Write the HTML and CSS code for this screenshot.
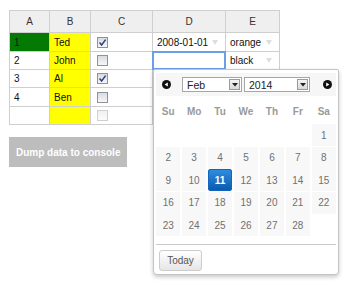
FILE: index.html
```html
<!DOCTYPE html>
<html>
<head>
<meta charset="utf-8">
<link rel="stylesheet" href="styles.css">
</head>
<body>
<div class="page">
  <div class="sheet">
    <div class="hd">A</div><div class="hd">B</div><div class="hd">C</div><div class="hd">D</div><div class="hd">E</div>

    <div class="c green">1</div>
    <div class="c yellow">Ted</div>
    <div class="c chk"><span class="cb"><svg width="9" height="9" viewBox="0 0 9 9"><path d="M1.5 4.6 L3.6 7 L7.6 1.6" fill="none" stroke="#2c4280" stroke-width="1.5"/></svg></span></div>
    <div class="c drop"><span>2008-01-01</span><span class="arr"></span></div>
    <div class="c drop"><span>orange</span><span class="arr"></span></div>

    <div class="c">2</div>
    <div class="c yellow">John</div>
    <div class="c chk"><span class="cb"></span></div>
    <div class="c sel"></div>
    <div class="c drop"><span>black</span><span class="arr"></span></div>

    <div class="c">3</div>
    <div class="c yellow">Al</div>
    <div class="c chk"><span class="cb"><svg width="9" height="9" viewBox="0 0 9 9"><path d="M1.5 4.6 L3.6 7 L7.6 1.6" fill="none" stroke="#2c4280" stroke-width="1.5"/></svg></span></div>
    <div class="c"></div>
    <div class="c"></div>

    <div class="c">4</div>
    <div class="c yellow">Ben</div>
    <div class="c chk"><span class="cb"></span></div>
    <div class="c"></div>
    <div class="c"></div>

    <div class="c"></div>
    <div class="c yellow"></div>
    <div class="c chk"><span class="cb faint"></span></div>
    <div class="c"></div>
    <div class="c"></div>
  </div>

  <button class="dump">Dump data to console</button>

  <div class="picker">
    <div class="ph">
      <svg class="nav prev" width="9" height="9" viewBox="0 0 9 9"><circle cx="4.5" cy="4.5" r="4.5" fill="#111"/><path d="M2.6 4.5 L5.8 2.6 L5.8 6.4 Z" fill="#fff"/></svg>
      <div class="selbox month"><span class="st">Feb</span><span class="sa"><svg width="6" height="4" viewBox="0 0 6 4"><path d="M0 0 H6 L3 3.5 Z" fill="#222"/></svg></span></div>
      <div class="selbox year"><span class="st">2014</span><span class="sa"><svg width="6" height="4" viewBox="0 0 6 4"><path d="M0 0 H6 L3 3.5 Z" fill="#222"/></svg></span></div>
      <svg class="nav next" width="9" height="9" viewBox="0 0 9 9"><circle cx="4.5" cy="4.5" r="4.5" fill="#111"/><path d="M6.4 4.5 L3.2 2.6 L3.2 6.4 Z" fill="#fff"/></svg>
    </div>
    <div class="dn">
      <span>Su</span><span>Mo</span><span>Tu</span><span>We</span><span>Th</span><span>Fr</span><span>Sa</span>
    </div>
    <div class="days">
      <span class="e"></span><span class="e"></span><span class="e"></span><span class="e"></span><span class="e"></span><span class="e"></span><span class="d">1</span>
      <span class="d">2</span><span class="d">3</span><span class="d">4</span><span class="d">5</span><span class="d">6</span><span class="d">7</span><span class="d">8</span>
      <span class="d">9</span><span class="d">10</span><span class="d on">11</span><span class="d">12</span><span class="d">13</span><span class="d">14</span><span class="d">15</span>
      <span class="d">16</span><span class="d">17</span><span class="d">18</span><span class="d">19</span><span class="d">20</span><span class="d">21</span><span class="d">22</span>
      <span class="d">23</span><span class="d">24</span><span class="d">25</span><span class="d">26</span><span class="d">27</span><span class="d">28</span><span class="e"></span>
    </div>
    <div class="sep"></div>
    <button class="today">Today</button>
  </div>
</div>
</body>
</html>
```

FILE: styles.css
```css
html, body {
  margin: 0;
  padding: 0;
  background: #fff;
}

body {
  font-family: "Liberation Sans", Arial, sans-serif;
  font-size: 10px;
  color: #222;
}

.page {
  position: relative;
  box-sizing: border-box;
  height: 285px;
  padding: 10px 0 0 9px;
}

.sheet {
  display: grid;
  grid-template-columns: 40px 41px 62px 73px 54px;
  grid-template-rows: 22px 19px 18px 18px 19px 18px;
  width: max-content;
  border-left: 1px solid #cfcfcf;
  border-top: 1px solid #cfcfcf;
}

.hd, .c {
  box-sizing: border-box;
  border-right: 1px solid #cfcfcf;
  border-bottom: 1px solid #cfcfcf;
  display: flex;
  align-items: center;
}

.hd {
  background: #efefef;
  justify-content: center;
  color: #333;
  font-size: 10px;
}

.c {
  padding: 0 4px;
  font-size: 10px;
  color: #111;
  background: #fff;
}

.green {
  background: #047a04;
  color: #111;
}

.yellow {
  background: #ffff00;
}

.chk {
  padding-left: 6px;
}

.cb {
  box-sizing: border-box;
  width: 11px;
  height: 11px;
  border: 1px solid #8f9399;
  background: linear-gradient(#d8dbe0, #f7f7f9);
  display: flex;
  align-items: center;
  justify-content: center;
}

.cb.faint {
  border-color: #cfcfcf;
  background: linear-gradient(#f0f0f0, #fbfbfb);
}

.drop {
  justify-content: space-between;
  padding-right: 7px;
}

.arr {
  width: 0;
  height: 0;
  border-left: 3px solid transparent;
  border-right: 3px solid transparent;
  border-top: 5px solid #dedede;
}

.sel {
  position: relative;
}

.sel::after {
  content: "";
  position: absolute;
  left: -1px;
  top: -1px;
  right: -1px;
  bottom: -1px;
  border: 2px solid #6d9fe6;
}

.dump {
  display: block;
  margin-top: 12px;
  width: 118px;
  height: 30px;
  padding: 0 0 0 7px;
  border: none;
  background: #bdbdbd;
  color: #fff;
  font-family: "Liberation Sans", Arial, sans-serif;
  font-weight: bold;
  font-size: 10px;
  text-align: left;
}

/* date picker popup */
.picker {
  position: absolute;
  left: 153px;
  top: 69px;
  width: 186px;
  box-sizing: border-box;
  border: 1px solid #c4c4c4;
  border-radius: 2px 2px 4px 4px;
  box-shadow: 0 2px 4px rgba(0, 0, 0, 0.22);
  background: #fff;
  padding: 3px 2px 3px 2px;
}

.ph {
  display: flex;
  align-items: center;
  height: 23px;
  background: #f6f6f6;
}

.nav {
  flex: none;
  display: block;
}

.prev {
  margin-left: 6px;
}

.next {
  margin-left: auto;
  margin-right: 4px;
}

.selbox {
  box-sizing: border-box;
  height: 15px;
  border: 1px solid #a6a6a6;
  background: #fff;
  display: flex;
  align-items: center;
  justify-content: space-between;
  font-size: 10.5px;
  color: #222;
}

.month {
  width: 60px;
  margin-left: 11px;
}

.year {
  width: 66px;
  margin-left: 2px;
}

.st {
  padding-left: 4px;
}

.sa {
  box-sizing: border-box;
  width: 11px;
  height: 11px;
  margin-right: 1px;
  border: 1px solid #9b9b9b;
  background: linear-gradient(#f4f4f4, #d9d9d9);
  display: flex;
  align-items: center;
  justify-content: center;
}

.dn, .days {
  display: grid;
  grid-template-columns: repeat(7, 1fr);
  column-gap: 1.5px;
}

.dn {
  margin-top: 4px;
  height: 22px;
  align-items: center;
  justify-items: center;
  font-weight: bold;
  color: #9a9a9a;
  font-size: 10px;
}

.days {
  margin-top: 2px;
  grid-auto-rows: 22px;
  row-gap: 0.5px;
}

.d {
  display: flex;
  align-items: center;
  justify-content: center;
  background: #f8f8f8;
  color: #707070;
  font-size: 10px;
}

.d.on {
  background: linear-gradient(#2f8fe0, #0858ae);
  color: #fff;
  font-weight: bold;
  border-radius: 3px;
  box-shadow: inset 0 0 0 1px #1266bd;
}

.sep {
  margin-top: 8px;
  height: 1px;
  background: #c9c9c9;
}

.today {
  display: block;
  margin: 5px 0 0 3px;
  width: 43px;
  height: 21px;
  padding: 0;
  border: 1px solid #cccccc;
  border-radius: 3px;
  background: linear-gradient(#ffffff, #e6e6e6);
  color: #555;
  font-family: "Liberation Sans", Arial, sans-serif;
  font-size: 10px;
}
```
